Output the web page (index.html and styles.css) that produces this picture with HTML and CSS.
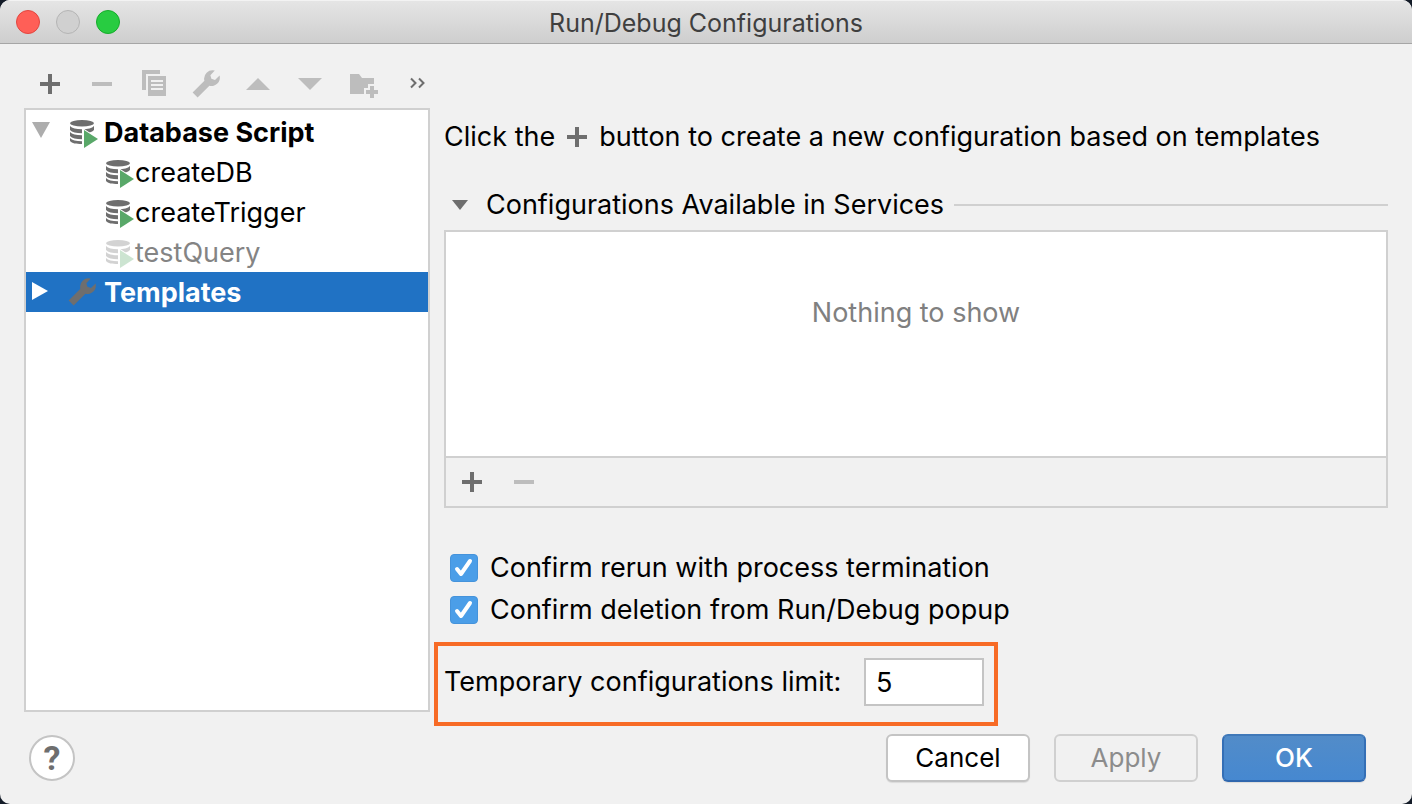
FILE: index.html
```html
<!DOCTYPE html>
<html lang="en">
<head>
<meta charset="utf-8">
<title>Run/Debug Configurations</title>
<link rel="stylesheet" href="styles.css">
</head>
<body>
<svg class="sprite" aria-hidden="true">
  <symbol id="add" viewBox="0 0 16 16"><path d="M3 7h4V3h2v4h4v2H9v4H7V9H3z"/></symbol>
  <symbol id="remove" viewBox="0 0 16 16"><path d="M3 7h10v2H3z"/></symbol>
  <symbol id="copy" viewBox="0 0 16 16"><path d="M2 1h9v2H4v8H2z"/><path fill-rule="evenodd" d="M5 4h9v10H5zm1.500 2v1h6V6zm0 2v1h6V8zm0 2v1h6v-1z"/></symbol>
  <symbol id="wrench" viewBox="0 0 16 16"><path d="M14.800 3.800 12.500 6 10.700 5.400 10.200 3.600l2.200-2.300A4.200 4.200 0 0 0 7.200 6.400L1.300 12.300l2.500 2.500L9.700 8.900A4.200 4.200 0 0 0 14.800 3.800z"/></symbol>
  <symbol id="up" viewBox="0 0 16 16"><path d="M2 11 8 5l6 6z"/></symbol>
  <symbol id="down" viewBox="0 0 16 16"><path d="M2 5h12l-6 6z"/></symbol>
  <symbol id="folder" viewBox="0 0 16 16"><path d="M2 3h4.500L8 5h6v3h-3v2H9v3H2z"/><path d="M12 9h2v2h2v2h-2v2h-2v-2h-2v-2h2z"/></symbol>
  <symbol id="script" viewBox="0 0 16 16">
    <g><ellipse cx="8" cy="3.600" rx="6" ry="1.600"/><path d="M2 5c1 1.200 3 1.600 6 1.600s5-.4 6-1.600v2c-1 1.200-3 1.600-6 1.600S3 8.200 2 7zM2 8c1 1.200 3 1.600 6 1.600v2c-3 0-5-.4-6-1.600zM2 11c1 1.200 3 1.600 6 1.600v1.400c-3 0-5-.3-6-1.500z"/></g>
    <path class="gap" d="M8 5.800 16 11H8z"/><path class="play" d="m9 7 7 4.500L9 16z"/>
  </symbol>
</svg>
<main class="window">
  <header class="titlebar">
    <div class="lights">
      <button class="light close" aria-label="Close"></button>
      <button class="light minimize" aria-label="Minimize" disabled></button>
      <button class="light expand" aria-label="Zoom"></button>
    </div>
    <h1 class="title">Run/Debug Configurations</h1>
  </header>
  <div class="content">
    <aside class="sidebar">
      <div class="toolbar">
        <button class="tool" aria-label="Add"><svg class="icon"><use href="#add"/></svg></button>
        <button class="tool" aria-label="Remove" disabled><svg class="icon"><use href="#remove"/></svg></button>
        <button class="tool" aria-label="Copy" disabled><svg class="icon"><use href="#copy"/></svg></button>
        <button class="tool" aria-label="Edit templates" disabled><svg class="icon"><use href="#wrench"/></svg></button>
        <button class="tool" aria-label="Move up" disabled><svg class="icon"><use href="#up"/></svg></button>
        <button class="tool" aria-label="Move down" disabled><svg class="icon"><use href="#down"/></svg></button>
        <button class="tool" aria-label="New folder" disabled><svg class="icon"><use href="#folder"/></svg></button>
        <button class="more" aria-label="More"><svg class="chevrons" viewBox="0 0 16 12"><path d="m1 1.500 4.500 4.500L1 10.500M9 1.500 13.500 6 9 10.500"/></svg></button>
      </div>
      <ul class="tree">
        <li class="row bold"><svg class="arrow open" viewBox="0 0 18 22"><path d="M0 1h18L9 17z"/></svg><svg class="icon"><use href="#script"/></svg><span class="name">Database Script</span></li>
        <li class="row child"><svg class="icon"><use href="#script"/></svg><span>createDB</span></li>
        <li class="row child"><svg class="icon"><use href="#script"/></svg><span>createTrigger</span></li>
        <li class="row child temporary"><svg class="icon"><use href="#script"/></svg><span>testQuery</span></li>
        <li class="row bold selected"><svg class="arrow" viewBox="0 0 18 22"><path d="M0 1v18l16-9z"/></svg><svg class="icon"><use href="#wrench"/></svg><span class="name">Templates</span></li>
      </ul>
    </aside>
    <section class="details">
      <p class="hint"><span>Click the</span> <svg class="icon"><use href="#add"/></svg> <span>button to create a new configuration based on templates</span></p>
      <h2 class="section-title"><svg class="fold" viewBox="0 0 16 10"><path d="M0 0h16L8 10z"/></svg><span>Configurations Available in Services</span></h2>
      <div class="services">
        <p class="empty">Nothing to show</p>
        <div class="services-bar">
          <button class="tool" aria-label="Add service"><svg class="icon"><use href="#add"/></svg></button>
          <button class="tool" aria-label="Remove service" disabled><svg class="icon"><use href="#remove"/></svg></button>
        </div>
      </div>
      <div class="options">
        <label class="option"><span class="tick"><input type="checkbox" checked><svg viewBox="0 0 28 28"><path d="m7 15 4 5 9-13"/></svg></span>Confirm rerun with process termination</label>
        <label class="option"><span class="tick"><input type="checkbox" checked><svg viewBox="0 0 28 28"><path d="m7 15 4 5 9-13"/></svg></span>Confirm deletion from Run/Debug popup</label>
      </div>
      <div class="limit">
        <label for="limit">Temporary configurations limit:</label>
        <input class="field" id="limit" type="text" value="5">
      </div>
    </section>
  </div>
  <footer class="footer">
    <button class="help" aria-label="Help">?</button>
    <div class="actions">
      <button class="action">Cancel</button>
      <button class="action" disabled>Apply</button>
      <button class="action primary">OK</button>
    </div>
  </footer>
</main>
</body>
</html>
```
FILE: styles.css
```css
* { box-sizing: border-box; }
body { margin: 0; background: #141c28; font: 27px/34px Inter, "Liberation Sans", sans-serif; color: #000; }
button, input { font: inherit; color: inherit; margin: 0; padding: 0; }
button { border: 0; background: none; }
h1, h2, p, ul { margin: 0; padding: 0; font-weight: 400; }
.sprite { display: none; }
.window { display: flex; flex-direction: column; min-height: 100vh; background: #f1f1f1; border-radius: 10px; overflow: hidden; }
.titlebar { display: grid; grid-template-columns: 1fr auto 1fr; align-items: center; height: 44px; padding: 0 16px; background: linear-gradient(#e5e5e5, #cecece); border-top: 1px solid #f3f3f3; border-bottom: 1px solid #a6a6a6; }
.lights { display: flex; gap: 16px; }
.light { width: 24px; height: 24px; border-radius: 50%; border: 1px solid; }
.close { background: #ff5f57; border-color: #e2463f; }
.minimize { background: #d0d0d0; border-color: #b4b4b4; }
.expand { background: #28cc41; border-color: #16ac2b; }
.title { padding-top: 2px; font-size: 25px; color: #3f3f3f; }
.content { flex: 1; display: grid; grid-template-columns: 406px 1fr; gap: 14px; padding: 0 24px; }
.sidebar { display: flex; flex-direction: column; padding-bottom: 14px; }
.toolbar { display: flex; height: 64px; padding-top: 16px; }
.icon { width: 32px; height: 32px; flex: none; fill: #6e6e6e; }
.tool { display: flex; align-items: center; justify-content: center; width: 52px; height: 48px; }
.tool:disabled .icon { fill: #bdbdbd; }
.more { flex: 1; display: flex; align-items: center; justify-content: flex-end; padding: 0 4px 2px 0; }
.chevrons { width: 16px; height: 12px; fill: none; stroke: #6e6e6e; stroke-width: 2; }
.tree { flex: 1; list-style: none; background: #fff; border: 2px solid #d0d0d0; padding: 2px 0; }
.row { display: flex; align-items: center; height: 40px; padding-left: 6px; }
.row span { padding-top: 2px; }
.child { gap: 1px; padding-left: 76px; }
.arrow { width: 18px; height: 22px; margin-right: 16px; fill: #fff; }
.open { fill: #adadad; }
.bold { font-weight: 700; }
.name { margin-left: 6px; }
.selected { background: #2072c4; color: #fff; }
.gap { fill: #fff; }
.play { fill: #59a869; }
.temporary { color: #848484; }
.temporary .icon { opacity: .3; }
.details { display: flex; flex-direction: column; min-width: 0; padding-top: 76px; }
.hint { display: flex; align-items: center; gap: 6px; }
.section-title { display: flex; align-items: center; gap: 18px; margin-top: 34px; padding-left: 8px; font-size: 27px; }
.section-title::after { content: ""; flex: 1; height: 2px; margin-left: -8px; background: #d0d0d0; }
.fold { width: 16px; height: 10px; fill: #6e6e6e; }
.services { flex: 1; display: flex; flex-direction: column; margin-top: 8px; border: 2px solid #d0d0d0; }
.empty { flex: 1; padding-top: 64px; text-align: center; color: #808080; background: #fff; }
.services-bar { display: flex; height: 50px; border-top: 2px solid #d0d0d0; }
.options { margin-top: 39px; }
.option { display: flex; align-items: center; gap: 12px; height: 42px; padding-left: 6px; }
.tick { display: grid; width: 28px; height: 28px; }
.tick > * { grid-area: 1 / 1; }
.tick input { appearance: none; width: 28px; height: 28px; border-radius: 4px; background: #4b9ee8; border: 1px solid #4593db; }
.tick svg { fill: none; stroke: #fff; stroke-width: 4; stroke-linecap: round; stroke-linejoin: round; pointer-events: none; }
.limit { display: flex; align-items: center; justify-content: space-between; width: 564px; margin: 11px 0 0 -10px; padding: 12px 10px 16px 6px; border: 4px solid #f76b26; }
.field { width: 120px; height: 48px; padding-left: 10px; background: #fff; border: 2px solid #c4c4c4; }
.footer { display: flex; align-items: center; justify-content: space-between; padding: 8px 46px 22px 29px; }
.help { width: 46px; height: 46px; border: 2px solid #c4c4c4; border-radius: 50%; background: #fff; color: #6e6e6e; font: 700 34px/40px Roboto, sans-serif; }
.actions { display: flex; gap: 24px; }
.action { width: 144px; height: 48px; border: 2px solid #c4c4c4; border-radius: 6px; background: #fff; box-shadow: 0 1px 1px #00000018; font-size: 26px; }
.action:disabled { background: none; border-color: #d0d0d0; color: #8c8c8c; box-shadow: none; }
.primary { background: linear-gradient(#528cc9, #4688d0); border-color: #4079b9 #346fb6 #2f67ae; color: #fff; font-weight: 500; }
```
